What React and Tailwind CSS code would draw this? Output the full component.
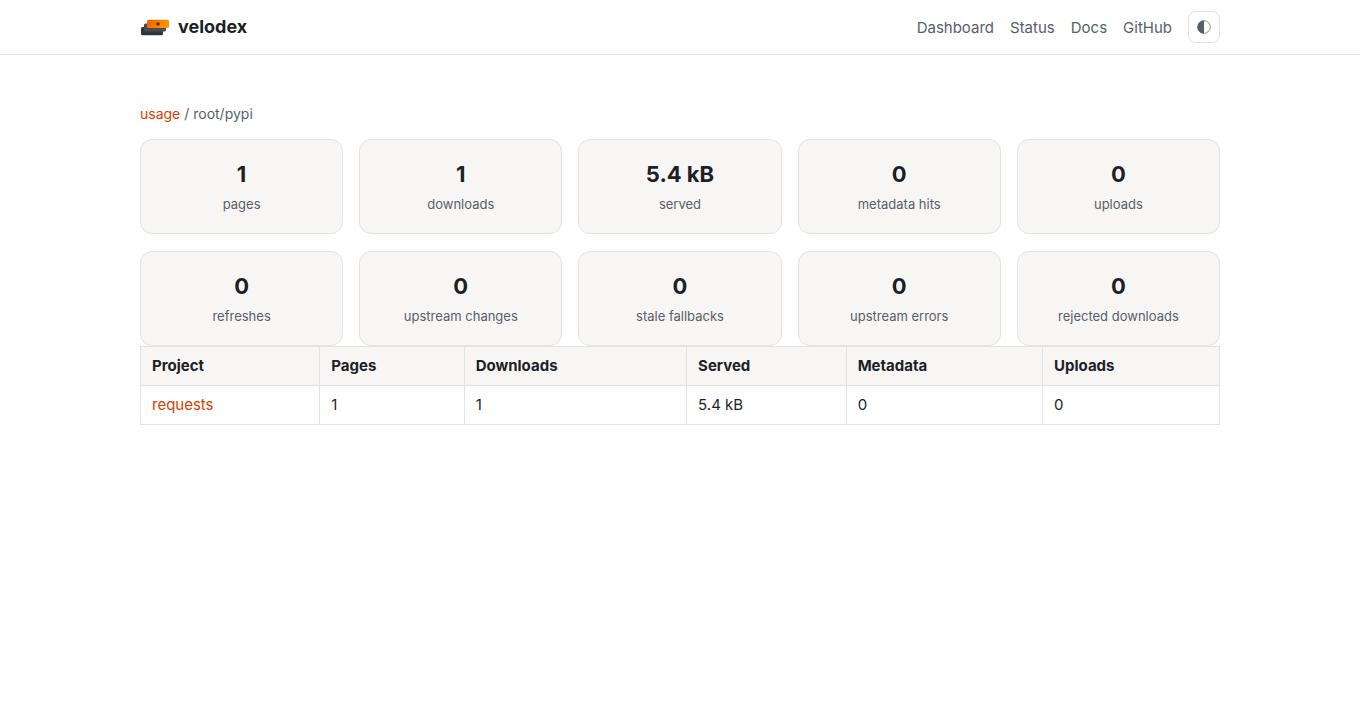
import React from "react";

const navLinks = ["Dashboard", "Status", "Docs", "GitHub"];

const stats = [
    { value: "1", label: "pages" },
    { value: "1", label: "downloads" },
    { value: "5.4 kB", label: "served" },
    { value: "0", label: "metadata hits" },
    { value: "0", label: "uploads" },
    { value: "0", label: "refreshes" },
    { value: "0", label: "upstream changes" },
    { value: "0", label: "stale fallbacks" },
    { value: "0", label: "upstream errors" },
    { value: "0", label: "rejected downloads" },
];

const columns = ["Project", "Pages", "Downloads", "Served", "Metadata", "Uploads"];

const projects = [
    { name: "requests", pages: 1, downloads: 1, served: "5.4 kB", metadata: 0, uploads: 0 },
];

function Logo() {
    return (
        <svg width="30" height="18" viewBox="0 0 30 18" aria-hidden="true">
            <defs>
                <linearGradient id="top-plate" x1="0" y1="0" x2="1" y2="0.3">
                    <stop offset="0" stopColor="#f55a00" />
                    <stop offset="1" stopColor="#ff9500" />
                </linearGradient>
            </defs>
            <rect x="1" y="9" width="22" height="8.2" rx="1.5" fill="#30343d" />
            <rect x="4" y="5.4" width="22" height="8.2" rx="1.5" fill="#464b55" />
            <rect x="7" y="1.8" width="22" height="8.2" rx="1.5" fill="url(#top-plate)" />
            <circle cx="18" cy="5.9" r="1.7" fill="#3a2c22" />
        </svg>
    );
}

function ThemeIcon() {
    return (
        <svg width="14" height="14" viewBox="0 0 14 14" aria-hidden="true">
            <circle cx="7" cy="7" r="6.3" fill="none" stroke="currentColor" strokeWidth="0.7" />
            <path d="M7 0.4a6.6 6.6 0 0 0 0 13.2z" fill="currentColor" />
        </svg>
    );
}

function Header() {
    return (
        <header className="border-b border-[#e5e3df]">
            <div className="max-w-[1128px] mx-auto px-6 py-[11px] flex items-center justify-between">
                <a href="#" className="flex items-center gap-2 text-lg leading-7 font-bold">
                    <Logo />
                    velodex
                </a>
                <nav className="flex items-center gap-4 text-[15px] leading-6 text-[#57606a]">
                    {navLinks.map((link) => (
                        <a key={link} href="#" className="pt-0.5 hover:text-[#1c1f26]">
                            {link}
                        </a>
                    ))}
                    <button
                        type="button"
                        aria-label="Toggle theme"
                        className="size-8 flex items-center justify-center rounded-lg border border-[#e5e3df]"
                    >
                        <ThemeIcon />
                    </button>
                </nav>
            </div>
        </header>
    );
}

function StatCard({ value, label }) {
    return (
        <div className="rounded-xl border border-[#e5e3df] bg-[#f7f6f4] pt-4 pb-[17px] text-center">
            <div className="text-[22px] leading-9 font-bold">{value}</div>
            <div className="text-[13px] leading-6 text-[#57606a]">{label}</div>
        </div>
    );
}

export default function App() {
    return (
        <div className="min-h-screen bg-white text-[#1c1f26] font-[Inter,sans-serif]">
            <Header />
            <main className="max-w-[1128px] mx-auto px-6 pt-12">
                <p className="mb-3.5 text-sm leading-[22px] text-[#57606a]">
                    <a href="#" className="text-[#d94100]">usage</a> / root/pypi
                </p>
                <div className="grid grid-cols-5 gap-x-4 gap-y-[17px]">
                    {stats.map((stat) => (
                        <StatCard key={stat.label} value={stat.value} label={stat.label} />
                    ))}
                </div>
                <table className="w-full border-collapse text-[15px] leading-6">
                    <thead>
                        <tr className="bg-[#f7f6f4] text-left">
                            {columns.map((column) => (
                                <th key={column} className="border border-[#e5e3df] px-[11px] py-[7px] font-bold">
                                    {column}
                                </th>
                            ))}
                        </tr>
                    </thead>
                    <tbody>
                        {projects.map((project) => (
                            <tr key={project.name}>
                                <td className="border border-[#e5e3df] px-[11px] py-[7px]">
                                    <a href="#" className="text-[#d94100]">{project.name}</a>
                                </td>
                                <td className="border border-[#e5e3df] px-[11px] py-[7px]">{project.pages}</td>
                                <td className="border border-[#e5e3df] px-[11px] py-[7px]">{project.downloads}</td>
                                <td className="border border-[#e5e3df] px-[11px] py-[7px]">{project.served}</td>
                                <td className="border border-[#e5e3df] px-[11px] py-[7px]">{project.metadata}</td>
                                <td className="border border-[#e5e3df] px-[11px] py-[7px]">{project.uploads}</td>
                            </tr>
                        ))}
                    </tbody>
                </table>
            </main>
        </div>
    );
}
